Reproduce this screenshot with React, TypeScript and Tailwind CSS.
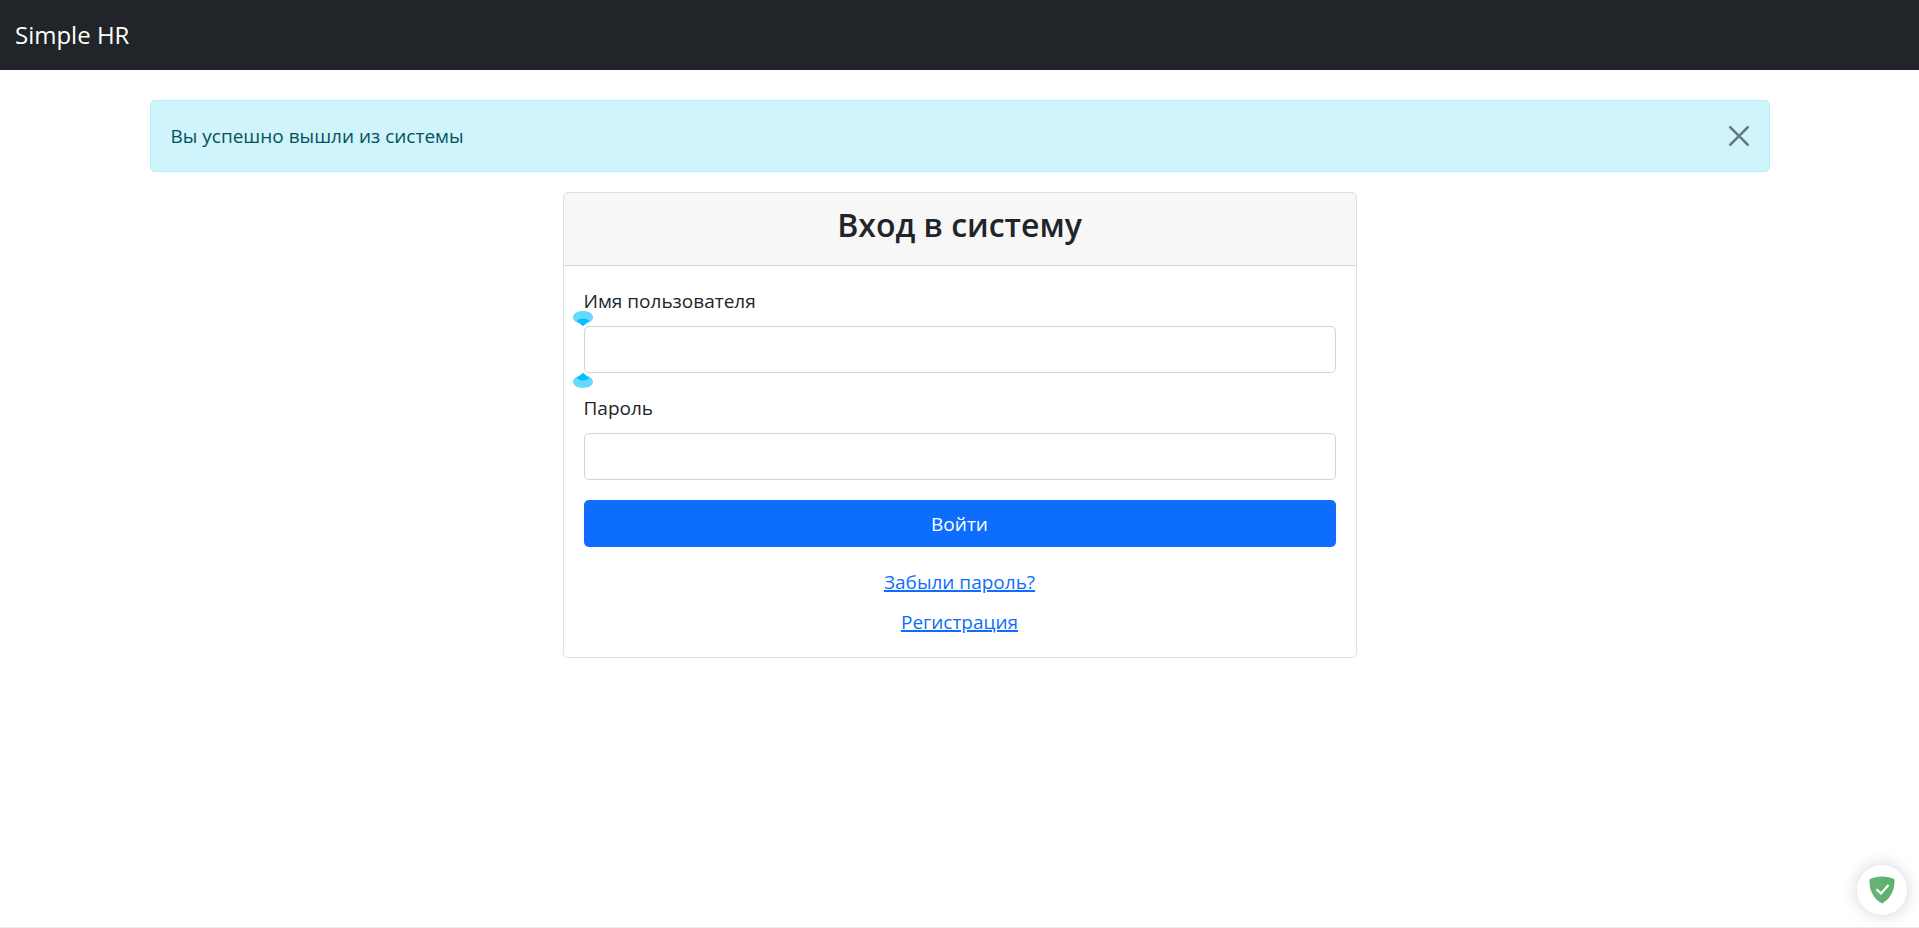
import { useState } from "react";

function CaretHandle({ flipped = false }: { flipped?: boolean }) {
  return (
    <svg
      viewBox="0 0 20 15"
      aria-hidden="true"
      className={
        flipped
          ? "absolute top-full -left-[11px] h-[15px] w-5 rotate-180"
          : "absolute bottom-full -left-[11px] h-[15px] w-5"
      }
    >
      <path d="M10 0C15.5 0 20 2.7 20 6.2C20 9.4 17 11.5 13.2 12.3L10 15L6.8 12.3C3 11.5 0 9.4 0 6.2C0 2.7 4.500 0 10 0Z" fill="#66d9ff" />
      <path d="M3.800 10C5.500 8.400 7.500 7.600 10 7.600S14.500 8.400 16.200 10L10 15Z" fill="#00bfff" />
    </svg>
  );
}

function Notice({ onClose }: { onClose: () => void }) {
  return (
    <div
      role="alert"
      className="mb-5 flex items-center justify-between rounded-[5px] border border-[#b6effb] bg-[#cff4fc] p-5 text-[#055160]"
    >
      <span>Вы успешно вышли из системы</span>
      <button type="button" aria-label="Закрыть" onClick={onClose} className="opacity-50">
        <svg viewBox="0 0 16 16" className="size-5" fill="#000">
          <path d="M.293.293a1 1 0 011.414 0L8 6.586 14.293.293a1 1 0 111.414 1.414L9.414 8l6.293 6.293a1 1 0 01-1.414 1.414L8 9.414l-6.293 6.293a1 1 0 01-1.414-1.414L6.586 8 .293 1.707a1 1 0 010-1.414z" />
        </svg>
      </button>
    </div>
  );
}

export default function App() {
  const [noticeOpen, setNoticeOpen] = useState(true);
  const inputClass =
    "block h-[47px] w-full rounded-[5px] border border-[#ced4da] bg-white px-4 outline-none";

  return (
    <div className="flex min-h-screen flex-col border-b border-[#ececec] bg-white font-['Open_Sans','Noto_Sans',sans-serif] text-[19px] leading-[30px] text-[#212529]">
      <nav className="flex h-[70px] items-center bg-[#212529] px-[15px]">
        <a href="#" className="text-2xl text-white">Simple HR</a>
      </nav>

      <main className="mx-auto mt-[30px] w-full max-w-[1650px] px-[15px]">
        {noticeOpen && <Notice onClose={() => setNoticeOpen(false)} />}

        <section className="mx-auto w-full max-w-[794px] rounded-[5px] border border-[#dfdfdf] bg-white">
          <header className="rounded-t-[4px] border-b border-[#d5d5d5] bg-[#f7f7f7] px-5 py-2.5">
            <h3 className="mb-2 text-center text-[32px] leading-[44px] font-semibold">Вход в систему</h3>
          </header>
          <form className="p-5" onSubmit={(e) => e.preventDefault()}>
            <div className="mb-5">
              <label htmlFor="username" className="mb-2.5 block">Имя пользователя</label>
              <div className="relative">
                <input id="username" name="username" type="text" className={inputClass} />
                <CaretHandle />
                <CaretHandle flipped />
              </div>
            </div>
            <div className="mb-5">
              <label htmlFor="password" className="mb-2.5 block">Пароль</label>
              <input id="password" name="password" type="password" className={inputClass} />
            </div>
            <button type="submit" className="mb-5 block h-[47px] w-full rounded-[5px] bg-[#0d6efd] text-white">
              Войти
            </button>
            <div className="flex flex-col items-center gap-2.5 text-[#0d6efd] underline decoration-2">
              <a href="#reset">Забыли пароль?</a>
              <a href="#register">Регистрация</a>
            </div>
          </form>
        </section>
      </main>

      <button
        type="button"
        aria-label="Защита"
        className="fixed right-3 bottom-[13px] flex size-[50px] items-center justify-center rounded-full bg-white shadow-[0_0_16px_rgba(0,0,0,0.18)]"
      >
        <svg viewBox="0 0 26 28" className="h-7 w-[26px]">
          <path d="M13 .5C9 .5 4.200 1.400 .5 3.200C.5 8 .2 20 13 27.500Z" fill="#67b279" />
          <path d="M13 .5C17 .5 21.800 1.400 25.500 3.200C25.500 8 25.800 20 13 27.500Z" fill="#5fb26b" />
          <path d="M7.500 13.200L12 17.500L19.500 9" fill="none" stroke="#fff" strokeWidth="2.200" />
        </svg>
      </button>
    </div>
  );
}
